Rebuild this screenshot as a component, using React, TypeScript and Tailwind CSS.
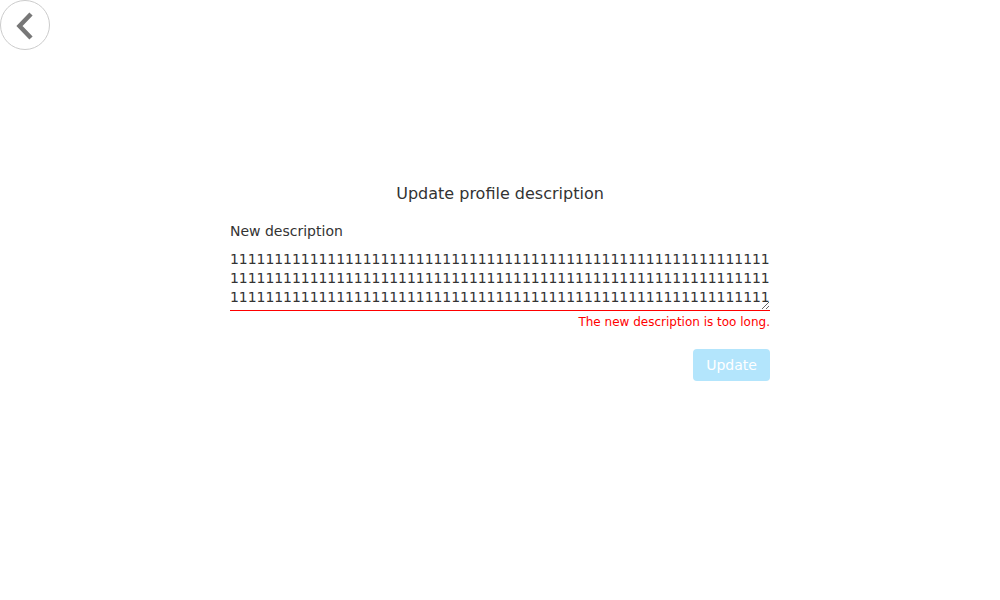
import React from "react";

export default function App() {
  const text = "1".repeat(183);
  return (
    <div className="relative w-[1000px] h-[600px] bg-white" style={{ fontFamily: '"DejaVu Sans", sans-serif' }}>
      <button className="absolute left-0 top-0 w-[50px] h-[50px] rounded-full border border-[#cccccc] bg-white">
        <svg className="absolute left-0 top-0" width="50" height="50" viewBox="0 0 50 50">
          <path d="M30 13 L18.5 25 L30 37" fill="none" stroke="#777777" strokeWidth="4.5" strokeLinecap="butt" strokeLinejoin="miter" />
        </svg>
      </button>
      <div className="flex flex-col items-center pt-[183px]">
        <div className="w-[540px] flex flex-col">
          <h1 className="text-center text-[16px] leading-[22px] text-[#333333]">Update profile description</h1>
          <label className="mt-[17px] text-[14px] leading-[18px] text-[#333333]">New description</label>
          <textarea
            className="mt-[10px] w-[540px] h-[61px] p-0 text-[14px] leading-[19px] tracking-[-0.06px] text-[#333333] border-0 border-b border-[#ff0000] outline-none resize-y block"
            style={{ fontFamily: '"DejaVu Sans", sans-serif' }}
            rows={3}
            defaultValue={text}
          />
          <div className="mt-[4px] text-right text-[12px] leading-[15px] text-[#ff0000]">The new description is too long.</div>
          <div className="flex justify-end mt-[19px]">
            <button disabled className="w-[77px] h-[32px] rounded-[4px] bg-[#b3e5fc] text-white text-[14px]">Update</button>
          </div>
        </div>
      </div>
    </div>
  );
}
